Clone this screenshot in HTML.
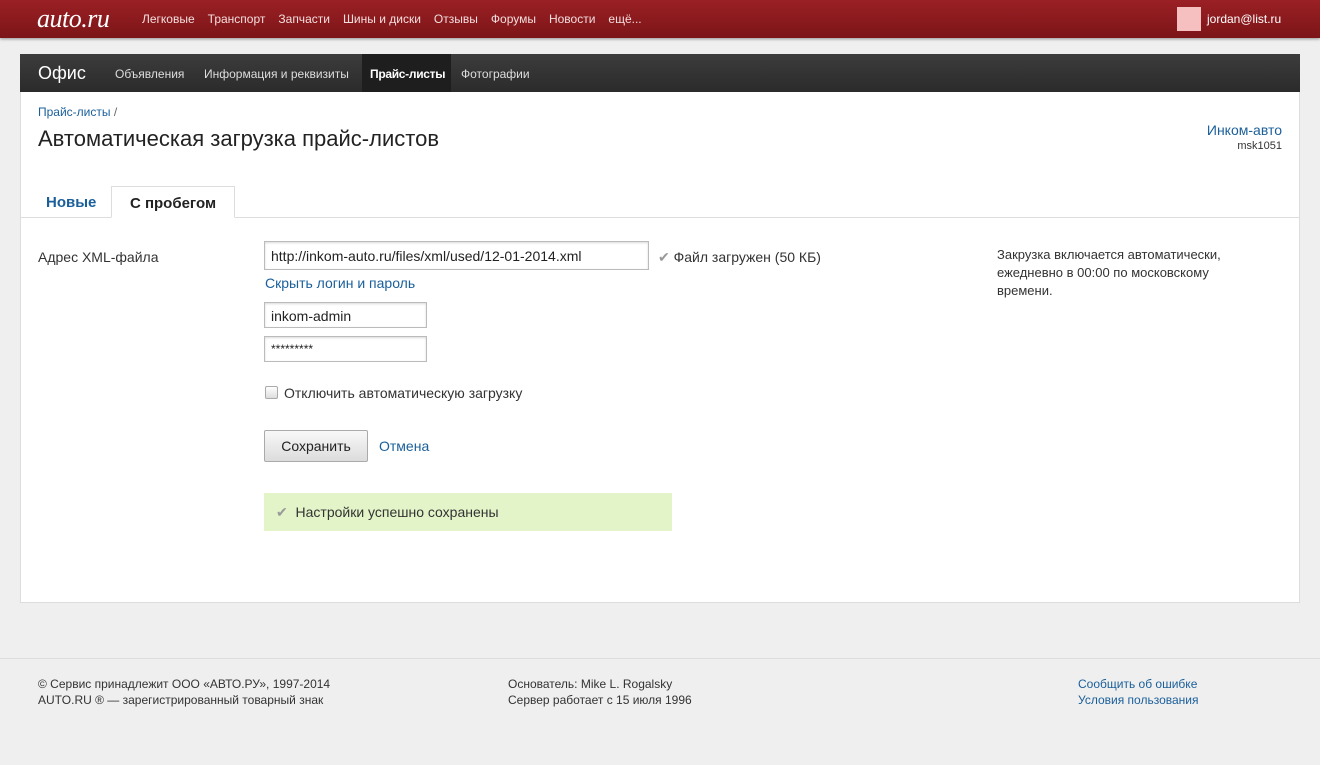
<!DOCTYPE html>
<html><head><meta charset="utf-8"><style>
*{margin:0;padding:0;box-sizing:border-box}
body{width:1320px;height:765px;background:#efefef;font-family:"Liberation Sans",Arial,sans-serif;font-size:13px;color:#333;position:relative;overflow:hidden}
a{color:#1a5f9a;text-decoration:none}
.top{position:absolute;left:0;top:0;width:1320px;height:38px;background:linear-gradient(#9a2024,#7c1518);box-shadow:0 1px 3px rgba(0,0,0,.4)}
.logo{position:absolute;left:37px;top:4px;font-family:"Liberation Serif",serif;font-style:italic;font-size:26px;color:#fff;letter-spacing:-0.5px}
.tnav{position:absolute;left:142px;top:12px;color:#f3dede;font-size:12px}
.tnav span{margin-right:13px}
.av{position:absolute;left:1177px;top:7px;width:24px;height:24px;background:#f6c0c0}
.user{position:absolute;left:1207px;top:12px;color:#fff;font-size:12px}
.panel{position:absolute;left:20px;top:54px;width:1280px;height:549px;background:#fff;border:1px solid #ddd;border-top:0}
.dark{position:absolute;left:20px;top:54px;width:1280px;height:38px;background:linear-gradient(#3c3c3c,#2b2b2b)}
.dark .t{position:absolute;left:18px;top:9px;color:#fff;font-size:18px}
.dark .i{position:absolute;top:13px;color:#ddd;font-size:12px}
.dark .act{position:absolute;left:342px;top:0;width:89px;height:38px;background:#1e1e1e}
.bc{position:absolute;left:38px;top:105px;font-size:12px;color:#666}
h1{position:absolute;left:38px;top:126px;font-size:22px;font-weight:normal;color:#222}
.co{position:absolute;right:38px;top:122px;text-align:right;font-size:14px}
.co div{font-size:11px;color:#333;margin-top:2px}
.tabs{position:absolute;left:20px;top:217px;width:1280px;border-top:1px solid #ddd}
.tab1{position:absolute;left:46px;top:194px;font-size:15px;font-weight:bold;color:#1a5f9a}
.tab2{position:absolute;left:111px;top:186px;width:124px;height:32px;background:#fff;border:1px solid #ddd;border-bottom:1px solid #fff;font-size:15px;font-weight:bold;color:#222;text-align:center;padding-top:8px;z-index:2}
.lbl{position:absolute;left:38px;top:249px;font-size:14px}
.inp{position:absolute;border:1px solid #bbb;box-shadow:inset 0 1px 2px rgba(0,0,0,.15);background:#fff;font-size:14px;padding:6px 6px;color:#222}
.ok{position:absolute;left:658px;top:249px;font-size:14px}
.ck{color:#999}
.note{position:absolute;left:997px;top:246px;font-size:13px;line-height:18px;width:260px}
.cb{position:absolute;left:265px;top:386px;width:13px;height:13px;border:1px solid #aaa;border-radius:2px;background:linear-gradient(#fff,#ddd)}
.btn{position:absolute;left:264px;top:430px;width:104px;height:32px;border:1px solid #aaa;border-radius:2px;background:linear-gradient(#f8f8f8,#dcdcdc);font-size:14px;text-align:center;padding-top:7px;color:#222}
.msg{position:absolute;left:264px;top:493px;width:408px;height:38px;background:#e2f4c8;font-size:14px;padding:11px 0 0 12px}
.fline{position:absolute;left:0;top:658px;width:1320px;border-top:1px solid #ddd}
.f{position:absolute;top:676px;font-size:12px;line-height:16px}
</style></head><body>
<div class="top"><div class="logo">auto.ru</div>
<div class="tnav"><span>Легковые</span><span>Транспорт</span><span>Запчасти</span><span>Шины и диски</span><span>Отзывы</span><span>Форумы</span><span>Новости</span><span>ещё...</span></div>
<div class="av"></div><div class="user">jordan@list.ru</div></div>
<div class="panel"></div>
<div class="dark"><div class="act"></div><div class="t">Офис</div>
<div class="i" style="left:95px">Объявления</div><div class="i" style="left:184px">Информация и реквизиты</div><div class="i" style="left:350px;color:#fff;font-weight:bold;letter-spacing:-0.3px">Прайс-листы</div><div class="i" style="left:441px">Фотографии</div></div>
<div class="bc"><a>Прайс-листы</a> /</div>
<h1>Автоматическая загрузка прайс-листов</h1>
<div class="co"><a>Инком-авто</a><div>msk1051</div></div>
<div class="tabs"></div>
<div class="tab1">Новые</div><div class="tab2">С пробегом</div>
<div class="lbl">Адрес XML-файла</div>
<div class="inp" style="left:264px;top:241px;width:385px;height:29px">http://inkom-auto.ru/files/xml/used/12-01-2014.xml</div>
<div class="ok"><span class="ck">✔</span> Файл загружен (50 КБ)</div>
<a style="position:absolute;left:265px;top:275px;font-size:14px">Скрыть логин и пароль</a>
<div class="inp" style="left:264px;top:302px;width:163px;height:26px;padding-top:5px">inkom-admin</div>
<div class="inp" style="left:264px;top:336px;width:163px;height:26px;padding-top:5px;font-size:12px">*********</div>
<div class="cb"></div><div style="position:absolute;left:284px;top:385px;font-size:14px">Отключить автоматическую загрузку</div>
<div class="btn">Сохранить</div><a style="position:absolute;left:379px;top:438px;font-size:14px">Отмена</a>
<div class="msg"><span class="ck">✔</span>&nbsp; Настройки успешно сохранены</div>
<div class="note">Закрузка включается автоматически, ежедневно в 00:00 по московскому времени.</div>
<div class="fline"></div>
<div class="f" style="left:38px">© Сервис принадлежит ООО «АВТО.РУ», 1997-2014<br>AUTO.RU ® — зарегистрированный товарный знак</div>
<div class="f" style="left:508px">Основатель: Mike L. Rogalsky<br>Сервер работает с 15 июля 1996</div>
<div class="f" style="left:1078px"><a>Сообщить об ошибке</a><br><a>Условия пользования</a></div>
</body></html>
